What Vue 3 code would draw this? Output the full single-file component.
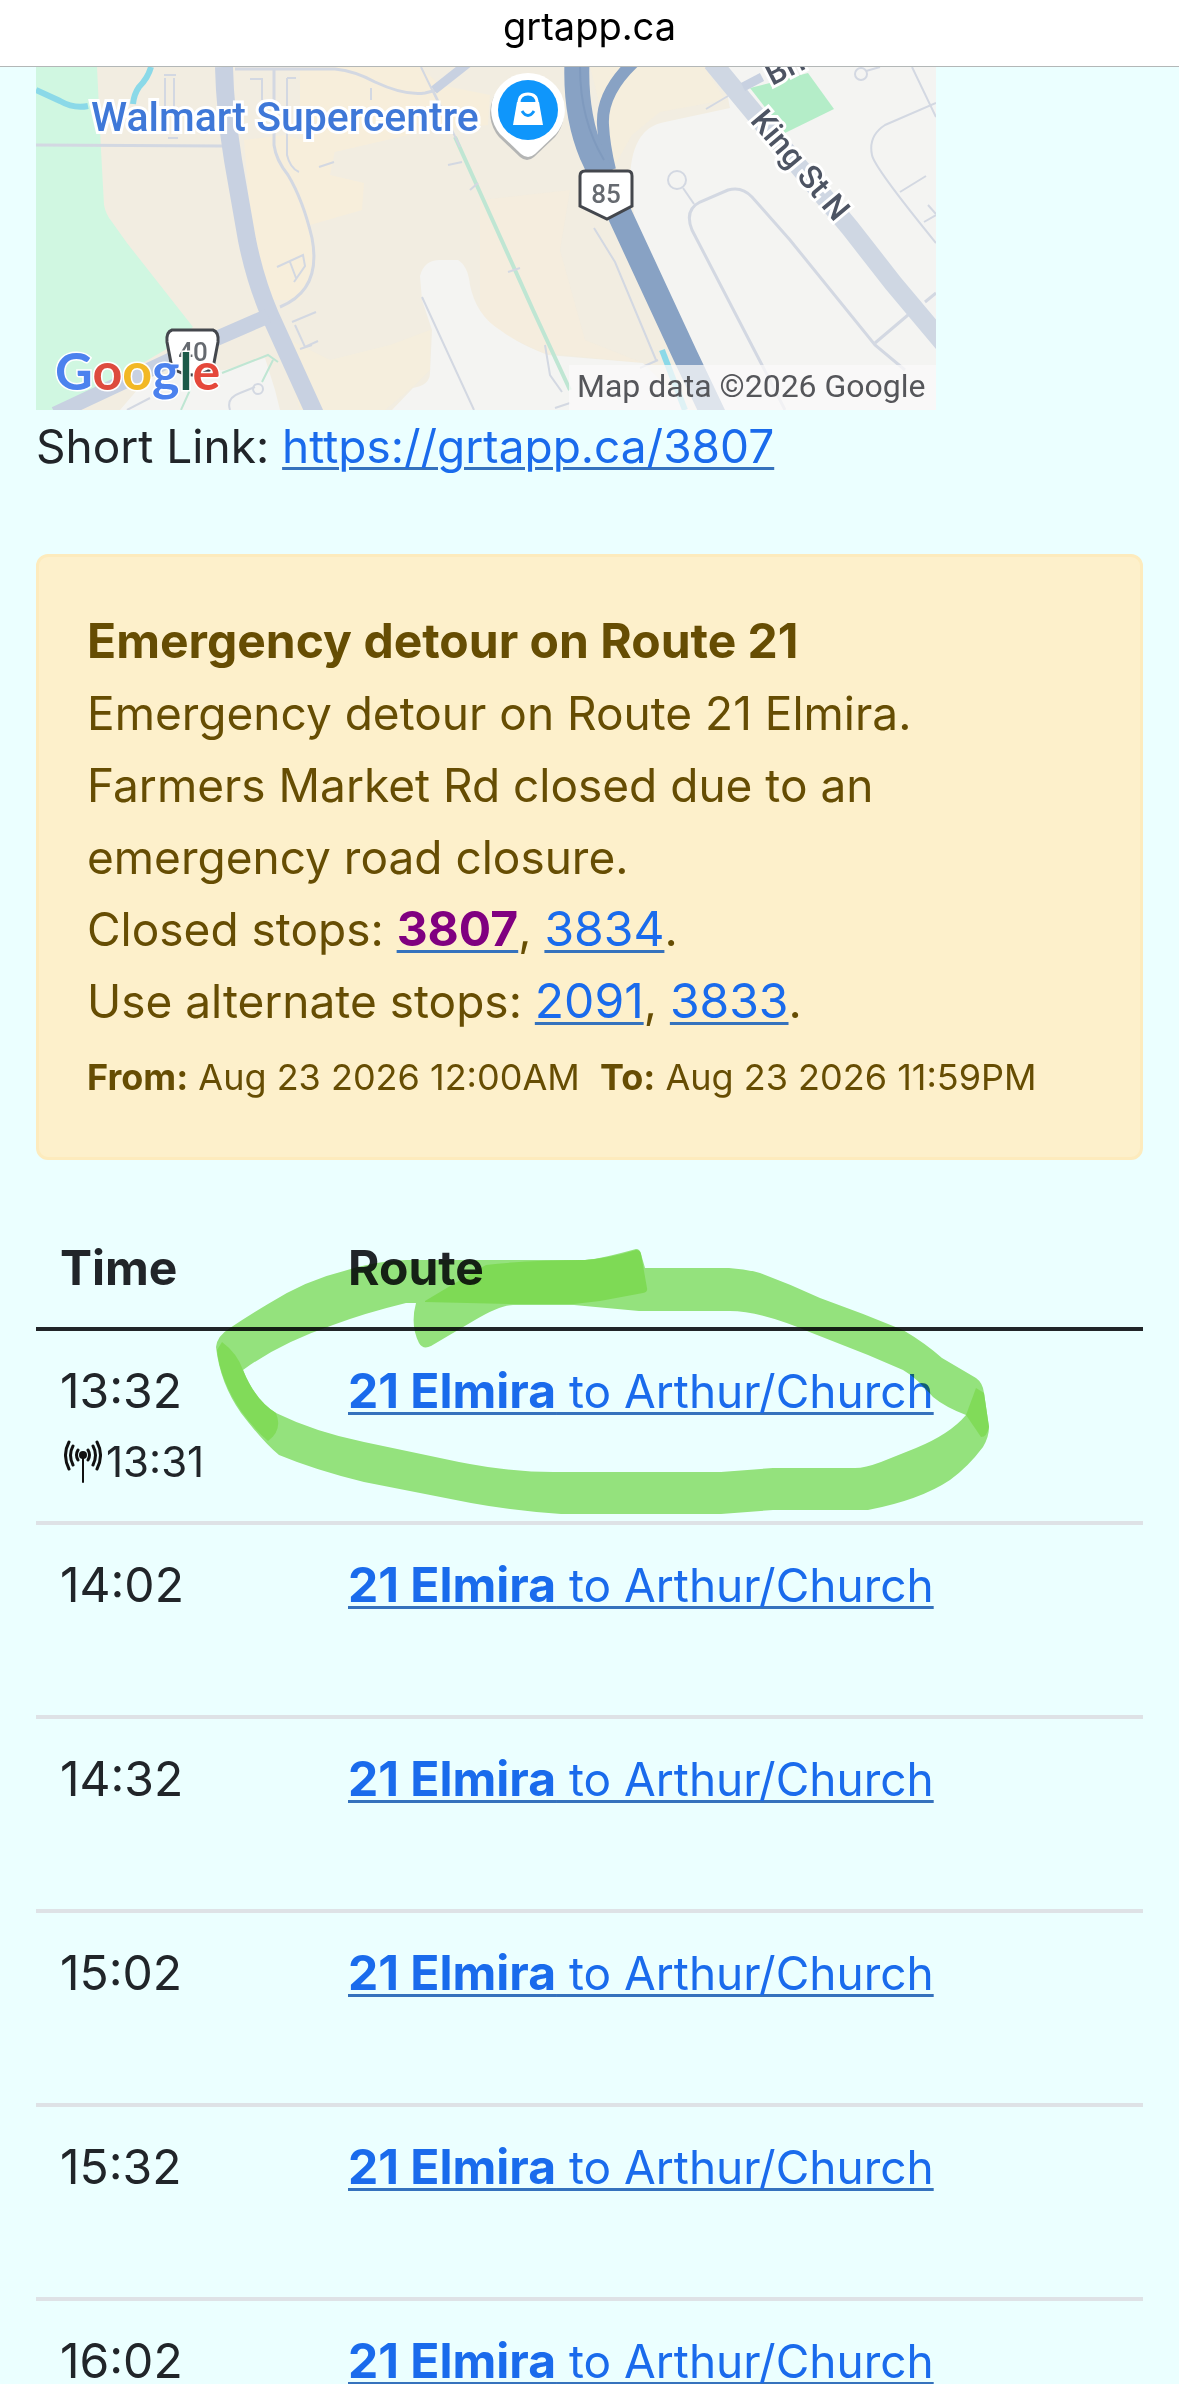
<template>
  <header class="address-bar">grtapp.ca</header>
  <main class="page">
    <svg class="map" viewBox="36 67 900 343" role="img" aria-label="Map of the stop">
      <rect x="36" y="67" width="900" height="343" fill="#f2ede1" />
      <!-- land areas -->
      <g fill="#f7eedb">
        <path d="M300 67H420L440 85L490 95L488 125L430 130L300 160Z" />
        <path d="M244 140L285 135L335 150L330 175L364 183L362 210L310 225L316 262L300 300L270 300L250 215Z" />
        <path d="M480 200L570 190L560 250L585 340L643 363L543 353L500 333L480 317Z" opacity=".5" />
        <path d="M280 335L300 410H385L415 385L430 370V330L390 345L330 360Z" opacity=".6" />
        <path d="M590 67H705L725 100L660 112L632 135L615 165Z" opacity=".6" />
      </g>
      <path d="M36 67H97L101 150L104 205Q106 215 112 222L127 243L193 327L165 350L62 410H36Z" fill="#d0f7e1" />
      <g fill="#f4f4f2">
        <path d="M722 67H936V410H712L640 250L630 190Q628 128 665 122L730 108Z" />
        <path d="M420 276Q424 260 440 260H458Q468 266 470 285Q476 315 500 330Q520 345 548 355L643 363L690 410H392L413 388Q430 385 430 373L432 330L422 300Z" />
        <path d="M150 375L225 370L265 358L275 390L280 410H120Z" />
      </g>
      <path d="M750 88L808 73L834 109L785 133Z" fill="#b4edc8" />
      <!-- water and trails -->
      <g fill="none" stroke="#8bd9e8" stroke-width="6">
        <path d="M36 90L60 101Q74 109 88 106" />
        <path d="M151 67Q148 78 139 87Q134 94 133 104" />
        <path d="M662 350L685 410" />
      </g>
      <g fill="none" stroke="#bfe6d3" stroke-width="4">
        <path d="M455 137L497 230L533 310L570 390" />
        <path d="M222 373L268 355L278 362M273 360L262 382M190 390L181 410" stroke-width="2" />
      </g>
      <!-- minor streets -->
      <g fill="none" stroke="#d3d8e2" stroke-width="3">
        <path d="M36 145L222 146" />
        <path d="M235 69H335Q355 71 375 82Q405 96 425 93L437 90" />
        <path d="M274 70V145Q276 160 288 175Q303 200 312 238Q322 290 280 307" />
        <path d="M164 75H176M165 78V112M174 78V112M168 138H178M250 79H262V100M287 78H296M287 78V155Q290 168 299 172M319 167L334 162M371 88V100" stroke-width="2" />
        <path d="M277 267L303 255L305 266L294 282M290 262L296 278M292 322L316 312M295 325L305 347L318 341M300 349L312 345" stroke-width="2" />
        <path d="M421 67L438 102M422 297L474 410M433 90L460 147" stroke-width="2" />
        <path d="M230 410Q226 398 240 393L255 387M127 410L150 398" stroke-width="2" />
        <circle cx="258" cy="389" r="5" stroke-width="2" />
        <path d="M448 165L462 162M470 190L478 183M508 272L520 268M545 345L550 375L562 392M555 408L570 403" stroke-width="2" />
        <path d="M594 228L615 262L656 360M640 368L658 360" stroke-width="2" />
        <circle cx="677" cy="180" r="9" stroke-width="2" />
        <path d="M683 188L694 204" stroke-width="2" />
        <path d="M785 410L762 365L692 230Q684 210 700 202L728 190Q742 186 752 197L790 240L875 345L905 370" />
        <path d="M706 109L728 96M936 103L885 125Q868 136 872 155Q874 167 936 243" stroke-width="2" />
        <circle cx="861" cy="74" r="6" stroke-width="2" />
        <path d="M866 71L880 67M912 67L936 117M900 192L926 176M924 222L936 215M928 205L936 214" stroke-width="2" />
        <path d="M875 343L908 315M925 302L936 293" />
      </g>
      <!-- main roads -->
      <g fill="none" stroke="#c8d1e1">
        <path d="M224 67Q225 110 233 160L247 240Q255 280 270 315L315 414" stroke-width="18" />
        <path d="M268 316L215 339L55 414" stroke-width="15" />
        <path d="M472 60L434 90" stroke-width="9" />
        <path d="M712 62L745 102L850 228L893 283L945 345" stroke-width="19" stroke="#cfd7e3" />
        <path d="M743 87L762 77" stroke-width="9" />
      </g>
      <g fill="none" stroke="#88a2c4">
        <path d="M636 60Q601 92 603 125Q604 145 610 170" stroke-width="12" />
        <path d="M577 62Q575 115 592 155L627 230L685 355L714 416" stroke-width="25" />
        <path d="M580 67Q580 120 604 160" stroke="#7f9abe" stroke-width="2" />
      </g>
      <!-- route shields -->
      <g fill="#fff" stroke="#44474d" stroke-width="3">
        <path d="M585 171H628Q632 171 632 176V206L607 219L580 206V176Q580 171 585 171Z" />
        <path d="M172 330H213Q219 332 218 342L213 368Q193 382 172 368L167 342Q166 332 172 330Z" />
      </g>
      <g class="shield-text">
        <text x="606" y="203">85</text>
        <text x="193" y="361">40</text>
      </g>
      <!-- place labels -->
      <text class="place" x="91" y="131">Walmart Supercentre</text>
      <path d="M528 73A37 37 0 0 1 556 134L535 154Q528 160 521 154L500 134A37 37 0 0 1 528 73Z" fill="#8b8f96" opacity=".6" transform="translate(-1 3)" />
      <path d="M528 73A37 37 0 0 1 556 134L535 154Q528 160 521 154L500 134A37 37 0 0 1 528 73Z" fill="#fff" />
      <circle cx="528" cy="110" r="30" fill="#0f96fb" />
      <path d="M517 102H539L543 125H513Z" fill="#fff" />
      <path d="M519 106V103Q519 94 528 94Q537 94 537 103V106" fill="none" stroke="#fff" stroke-width="3" />
      <path d="M522 111Q528 120 534 111" fill="none" stroke="#0f96fb" stroke-width="3" />
      <text class="street" text-anchor="middle" transform="translate(792 172) rotate(50)">King St N</text>
      <text class="street" transform="translate(772 86) rotate(-27)">Bri</text>
      <text class="logo" x="55" y="390"><tspan fill="#4c82ee">G</tspan><tspan fill="#dd4b3e">o</tspan><tspan fill="#f2b825">o</tspan><tspan fill="#4c82ee">g</tspan><tspan fill="#1c5a49">l</tspan><tspan fill="#e5483b">e</tspan></text>
      <rect x="569" y="365" width="367" height="45" fill="#fbf9fa" opacity=".75" />
      <text class="credit" x="577" y="397">Map data ©2026 Google</text>
    </svg>

    <p class="short-link">Short Link: <a href="https://grtapp.ca/3807">https://grtapp.ca/3807</a></p>

    <section class="alert" role="alert">
      <strong>Emergency detour on Route 21</strong><br>
      Emergency detour on Route 21 Elmira.<br>
      Farmers Market Rd closed due to an<br>
      emergency road closure.<br>
      Closed stops: <a href="#3807"><strong class="current">3807</strong></a>, <a href="#3834">3834</a>.<br>
      Use alternate stops: <a href="#2091">2091</a>, <a href="#3833">3833</a>.<br>
      <small><strong>From:</strong> Aug 23 2026 12:00AM &nbsp;<strong>To:</strong> Aug 23 2026 11:59PM</small>
    </section>

    <div class="departures">
      <table>
        <thead>
          <tr>
            <th scope="col" class="time-col">Time</th>
            <th scope="col">Route</th>
          </tr>
        </thead>
        <tbody>
          <tr v-for="trip in trips" :key="trip.time">
            <td class="time">
              {{ trip.time }}
              <div class="live">
                <template v-if="trip.live">
                  <svg class="antenna" viewBox="0 0 38 44" aria-hidden="true">
                    <g fill="none" stroke="#111" stroke-width="3" stroke-linecap="round">
                      <path d="M19 15V42" stroke-width="2" />
                      <path d="M14 10Q11 15 14 20M9 6Q4 15 9 25M5 2Q-2 15 5 29" />
                      <path d="M24 10Q27 15 24 20M29 6Q34 15 29 25M33 2Q40 15 33 29" />
                    </g>
                    <circle cx="19" cy="15" r="4" fill="#111" />
                  </svg>
                  <span>{{ trip.live }}</span>
                </template>
              </div>
            </td>
            <td><a href="#route-21"><strong>21 Elmira</strong> to Arthur/Church</a></td>
          </tr>
        </tbody>
      </table>

      <!-- highlighter loop around the next departure -->
      <svg class="marker" viewBox="210 1244 786 276" aria-hidden="true">
        <path fill="#a1e27d" fill-rule="evenodd" d="M216 1347Q217 1336 230 1328Q248 1316 268 1304Q306 1280 344 1271Q375 1261 406 1260H585Q600 1259 636 1249Q640 1249 641 1254L645 1268H729Q746 1269 760 1273Q790 1284 820 1298Q862 1313 903 1330Q925 1343 942 1358L976 1378Q983 1383 984 1393L989 1427Q989 1437 983 1447Q968 1467 950 1480Q920 1500 868 1510H773L721 1514H561Q515 1511 471 1503L364 1482Q315 1470 279 1455Q264 1443 241 1413Q220 1383 216 1347Z
          M243 1370Q255 1400 276 1413Q315 1432 364 1442L459 1462Q515 1473 561 1472H721L773 1468H855Q865 1468 881 1462L916 1448Q950 1434 966 1415Q945 1407 933 1397Q917 1378 903 1370L868 1355L812 1333Q760 1311 730 1311H639L574 1305H513Q500 1305 475 1320L431 1346Q423 1350 419 1343Q410 1325 416 1303H406Q365 1313 333 1325Q280 1343 243 1370Z" />
        <path fill="#89da55" d="M425 1301Q460 1280 486 1265Q530 1260 585 1260Q610 1258 636 1250Q640 1250 641 1254L647 1288Q648 1292 643 1293L600 1301L574 1304H509L425 1302Z" />
        <path fill="#89da55" d="M222 1342Q237 1353 243 1370Q255 1400 276 1413Q283 1430 268 1441Q255 1430 241 1411Q220 1380 217 1350Z" opacity=".9" />
        <path fill="#89da55" d="M976 1388L984 1393L989 1427Q987 1437 981 1437L966 1415Z" opacity=".9" />
      </svg>
    </div>
  </main>
</template>

<script setup>
const trips = [
  { time: '13:32', live: '13:31' },
  { time: '14:02' },
  { time: '14:32' },
  { time: '15:02' },
  { time: '15:32' },
  { time: '16:02' }
]
</script>

<style>
html {
  height: 100%;
  overflow: hidden;
}
body {
  height: 100%;
  overflow: hidden;
  background-color: #ebffff;
}
</style>

<style scoped>
.address-bar {
  box-sizing: border-box;
  height: 67px;
  padding-top: 2px;
  border-bottom: 1px solid #b3b7b7;
  background-color: #fff;
  color: #000;
  font: 38px/48px Inter, sans-serif;
  text-align: center;
}
.page {
  padding: 0 36px;
  font: 46px/72px Inter, sans-serif;
  color: #212529;
}
.map {
  display: block;
  width: 900px;
  max-width: 100%;
}
.map text {
  font-family: Roboto, sans-serif;
  font-weight: 500;
}
.map .place {
  font-size: 41px;
  fill: #3f78d8;
  stroke: #fff;
  stroke-width: 6px;
  paint-order: stroke;
}
.map .street {
  font-size: 32px;
  fill: #4d5463;
  stroke: #fff;
  stroke-width: 6px;
  paint-order: stroke;
}
.map .shield-text {
  font-size: 26px;
  fill: #666a70;
  text-anchor: middle;
}
.map .logo {
  font-family: Lato, sans-serif;
  font-size: 52px;
  font-weight: bold;
  stroke: #fff;
  stroke-width: 3px;
  paint-order: stroke;
}
.map .credit {
  font-size: 32px;
  font-weight: 400;
  fill: #55565a;
}
a {
  color: #1a6bec;
  text-decoration: underline #3572bd 3px;
  text-underline-offset: 4px;
}
strong,
th,
.time,
.alert a {
  font-size: 48px;
}
strong,
th {
  font-weight: 700;
}
.short-link {
  margin: 0 0 72px;
}
.alert {
  padding: 48px;
  border: 3px solid #fdebbd;
  border-radius: 12px;
  background-color: #fdf0cb;
  color: #664d03;
}
.alert .current {
  color: purple;
}
.alert small,
.alert small strong {
  font-size: 36px;
  line-height: 60px;
}
.departures {
  position: relative;
  margin-top: 48px;
}
table {
  width: 100%;
  border-collapse: collapse;
  line-height: 71px;
}
th,
td {
  padding: 24px;
  border-bottom: 4px solid #dee2e6;
  text-align: left;
  vertical-align: top;
}
th {
  border-bottom-color: #212529;
}
.time-col {
  width: 240px;
}
.live {
  display: flex;
  align-items: center;
  height: 71px;
  font-size: 42px;
}
.antenna {
  width: 38px;
  height: 44px;
  margin: 0 4px;
}
.marker {
  position: absolute;
  top: 36px;
  left: 174px;
  width: 786px;
  mix-blend-mode: multiply;
  pointer-events: none;
}
</style>
